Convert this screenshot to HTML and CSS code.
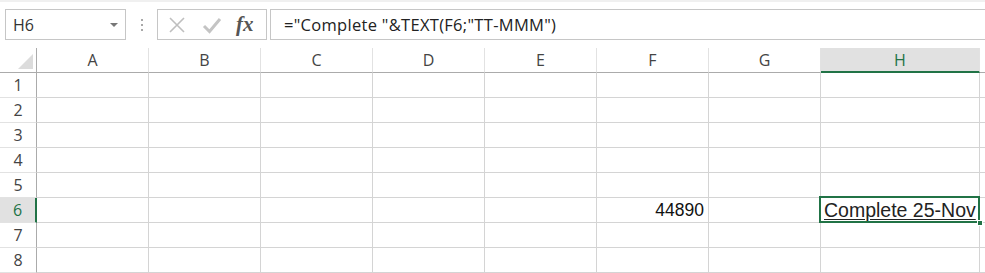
FILE: index.html
```html
<!DOCTYPE html>
<html lang="en">

<head>
    <meta charset="UTF-8">
    <title>Sheet</title>
    <link rel="stylesheet" href="styles.css">
</head>

<body>
    <!--formula bar-->
    <div class="bar">
        <div class="namebox">
            <span>H6</span>
            <i class="caret"></i>
        </div>
        <div class="grip"><i></i><i></i><i></i></div>
        <div class="buttons">
            <svg class="btn" width="18" height="18" viewBox="0 0 18 18">
                <path d="M2 2L16 16M16 2L2 16" stroke="#bfbfbf" stroke-width="1.6" fill="none"/>
            </svg>
            <svg class="btn" width="20" height="18" viewBox="0 0 20 18">
                <path d="M2 10L7.5 15.5L18 3" stroke="#c4c4c4" stroke-width="3" fill="none"/>
            </svg>
            <span class="fx">fx</span>
        </div>
        <div class="formula">="Complete "&amp;TEXT(F6;"TT-MMM")</div>
    </div>

    <!--grid-->
    <div class="sheet">
        <div class="corner"><i></i></div>
        <div class="col">A</div>
        <div class="col">B</div>
        <div class="col">C</div>
        <div class="col">D</div>
        <div class="col">E</div>
        <div class="col">F</div>
        <div class="col">G</div>
        <div class="col active">H</div>
        <div class="col rest"></div>

        <div class="row">1</div><div class="cell"></div><div class="cell"></div><div class="cell"></div><div class="cell"></div><div class="cell"></div><div class="cell"></div><div class="cell"></div><div class="cell"></div><div class="cell rest"></div>
        <div class="row">2</div><div class="cell"></div><div class="cell"></div><div class="cell"></div><div class="cell"></div><div class="cell"></div><div class="cell"></div><div class="cell"></div><div class="cell"></div><div class="cell rest"></div>
        <div class="row">3</div><div class="cell"></div><div class="cell"></div><div class="cell"></div><div class="cell"></div><div class="cell"></div><div class="cell"></div><div class="cell"></div><div class="cell"></div><div class="cell rest"></div>
        <div class="row">4</div><div class="cell"></div><div class="cell"></div><div class="cell"></div><div class="cell"></div><div class="cell"></div><div class="cell"></div><div class="cell"></div><div class="cell"></div><div class="cell rest"></div>
        <div class="row">5</div><div class="cell"></div><div class="cell"></div><div class="cell"></div><div class="cell"></div><div class="cell"></div><div class="cell"></div><div class="cell"></div><div class="cell"></div><div class="cell rest"></div>
        <div class="row active">6</div><div class="cell"></div><div class="cell"></div><div class="cell"></div><div class="cell"></div><div class="cell"></div><div class="cell num">44890</div><div class="cell"></div><div class="cell selected"><span>Complete 25-Nov</span><i class="handle"></i></div><div class="cell rest"></div>
        <div class="row">7</div><div class="cell"></div><div class="cell"></div><div class="cell"></div><div class="cell"></div><div class="cell"></div><div class="cell"></div><div class="cell"></div><div class="cell"></div><div class="cell rest"></div>
        <div class="row">8</div><div class="cell"></div><div class="cell"></div><div class="cell"></div><div class="cell"></div><div class="cell"></div><div class="cell"></div><div class="cell"></div><div class="cell"></div><div class="cell rest"></div>
    </div>
</body>

</html>
```

FILE: styles.css
```css
* {
    margin: 0;
    padding: 0;
    box-sizing: border-box;
}

body {
    width: 985px;
    height: 273px;
    overflow: hidden;
    background: #fff;
    font-family: "Open Sans", "Noto Sans", sans-serif;
    color: #444;
}

/* formula bar */
.bar {
    height: 48px;
    display: flex;
    align-items: flex-start;
    padding: 7px 0 0 5px;
    border-top: 2px solid #f0f0f0;
}

.namebox,
.buttons,
.formula {
    height: 31px;
    border: 1px solid #c6c6c6;
    display: flex;
    align-items: center;
}

.namebox {
    width: 121px;
    padding: 0 7px 0 7px;
    justify-content: space-between;
    font-size: 16px;
    color: #333;
}

.caret {
    width: 0;
    height: 0;
    border-left: 4px solid transparent;
    border-right: 4px solid transparent;
    border-top: 4px solid #777;
}

.grip {
    width: 31px;
    height: 31px;
    display: flex;
    flex-direction: column;
    align-items: center;
    justify-content: center;
    gap: 3px;
}

.grip i {
    width: 2px;
    height: 2px;
    background: #a8a8a8;
}

.buttons {
    width: 110px;
    padding: 0 0 0 10px;
    gap: 16px;
}

.fx {
    font-family: "Liberation Serif", serif;
    font-style: italic;
    font-weight: bold;
    font-size: 21px;
    color: #555;
    margin-left: -2px;
    line-height: 1;
}

.formula {
    flex: 1;
    margin-left: 3px;
    border-right: none;
    padding-left: 13px;
    font-size: 16.5px;
    letter-spacing: 0.3px;
    color: #222;
}

/* grid */
.sheet {
    display: grid;
    grid-template-columns: 37px repeat(7, 112px) 159px 1fr;
    grid-auto-rows: 25px;
}

.corner,
.col,
.row,
.cell {
    border-right: 1px solid #d4d4d4;
    border-bottom: 1px solid #d4d4d4;
}

.corner {
    border-right: 1px solid #ababab;
    border-bottom: 1px solid #ababab;
    position: relative;
}

.corner i {
    position: absolute;
    right: 3px;
    bottom: 3px;
    width: 0;
    height: 0;
    border-left: 15px solid transparent;
    border-bottom: 15px solid #dcdcdc;
}

.col {
    border-right-color: #e2e2e2;
    border-bottom: 1px solid #ababab;
    text-align: center;
    font-size: 16px;
    line-height: 24px;
}

.col.active {
    background: #e1e1e1;
    color: #217346;
    border-bottom: 2px solid #217346;
}

.row {
    border-right: 1px solid #ababab;
    border-bottom-color: #e2e2e2;
    text-align: center;
    font-size: 16px;
    line-height: 24px;
}

.row.active {
    background: #e1e1e1;
    color: #217346;
    border-right: 2px solid #217346;
}

.rest {
    border-right: none;
}

.num {
    text-align: right;
    padding-right: 4px;
    font-family: "Liberation Sans", Arial, sans-serif;
    font-size: 17.5px;
    line-height: 25px;
    color: #111;
}

.selected {
    position: relative;
    font-family: "Liberation Sans", Arial, sans-serif;
    font-size: 19.5px;
    line-height: 24px;
    color: #222;
    padding-left: 3px;
}

.selected span {
    text-decoration: underline;
    text-underline-offset: 2px;
}

.selected::after {
    content: "";
    position: absolute;
    left: -2px;
    top: -2px;
    right: -1px;
    bottom: -1px;
    border: 2px solid #217346;
}

.handle {
    position: absolute;
    right: -4px;
    bottom: -4px;
    width: 6px;
    height: 6px;
    background: #217346;
    border: 1px solid #fff;
    z-index: 1;
}
```
